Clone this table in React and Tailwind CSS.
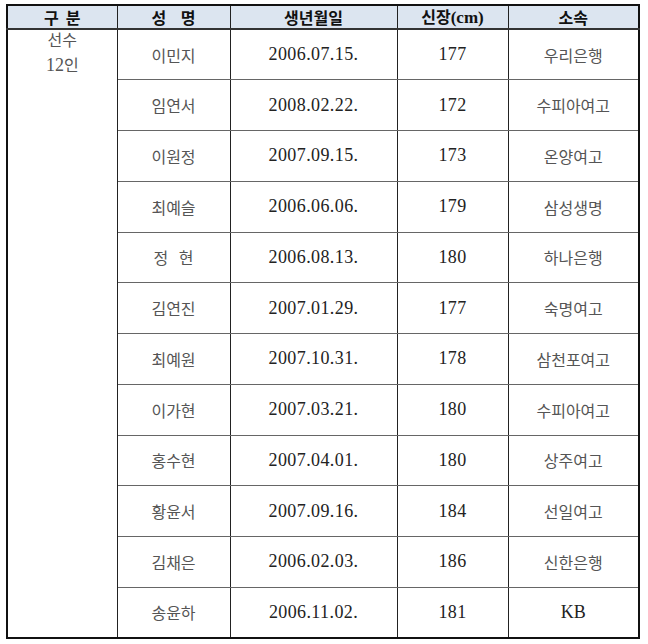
import React from "react";

const rows = [
  ["이민지", "2006.07.15.", "177", "우리은행"],
  ["임연서", "2008.02.22.", "172", "수피아여고"],
  ["이원정", "2007.09.15.", "173", "온양여고"],
  ["최예슬", "2006.06.06.", "179", "삼성생명"],
  ["정\u00a0\u00a0\u00a0현", "2006.08.13.", "180", "하나은행"],
  ["김연진", "2007.01.29.", "177", "숙명여고"],
  ["최예원", "2007.10.31.", "178", "삼천포여고"],
  ["이가현", "2007.03.21.", "180", "수피아여고"],
  ["홍수현", "2007.04.01.", "180", "상주여고"],
  ["황윤서", "2007.09.16.", "184", "선일여고"],
  ["김채은", "2006.02.03.", "186", "신한은행"],
  ["송윤하", "2006.11.02.", "181", "KB"],
];

const ko = { fontFamily: '"Noto Sans CJK KR", "Noto Sans", sans-serif' };
const num = { fontFamily: '"Liberation Serif", "Noto Sans CJK KR", serif' };

export default function App() {
  return (
    <div className="w-[648px] h-[644px] bg-white pt-[4px] pl-[6px]">
      <table
        className="border-collapse border-2 border-[#111] table-fixed w-[632px]"
        style={ko}
      >
        <colgroup>
          <col className="w-[110px]" />
          <col className="w-[113px]" />
          <col className="w-[167px]" />
          <col className="w-[111px]" />
          <col className="w-[131px]" />
        </colgroup>
        <thead>
          <tr className="h-[24px] bg-[#dce5f0]">
            <th className="border border-[#222] border-b-2 border-b-[#333] text-[16px] font-bold text-[#111] leading-none p-0">
              구&nbsp;&nbsp;분
            </th>
            <th className="border border-[#222] border-b-2 border-b-[#333] text-[16px] font-bold text-[#111] leading-none p-0">
              성&nbsp;&nbsp;&nbsp;&nbsp;명
            </th>
            <th className="border border-[#222] border-b-2 border-b-[#333] text-[16px] font-bold text-[#111] leading-none p-0">
              생년월일
            </th>
            <th className="border border-[#222] border-b-2 border-b-[#333] text-[16px] font-bold text-[#111] leading-none p-0">
              신장<span style={num} className="text-[17px]">(cm)</span>
            </th>
            <th className="border border-[#222] border-b-2 border-b-[#333] text-[16px] font-bold text-[#111] leading-none p-0">
              소속
            </th>
          </tr>
        </thead>
        <tbody>
          {rows.map((r, i) => (
            <tr key={i} className="h-[50.75px]">
              {i === 0 && (
                <td
                  rowSpan={12}
                  className="border-r border-[#222] align-top text-center text-[16px] leading-[25px] text-[#555] p-0"
                >
                  <div className="-mt-[3px]">선수</div>
                  <div>
                    <span style={num} className="text-[18px]">12</span>인
                  </div>
                </td>
              )}
              <td className="border border-[#222] border-y-[#666] text-center text-[16px] text-[#555] p-0">
                {r[0]}
              </td>
              <td
                style={num}
                className="border border-[#222] border-y-[#666] text-center text-[18px] tracking-[0.4px] text-[#222] p-0"
              >
                {r[1]}
              </td>
              <td
                style={num}
                className="border border-[#222] border-y-[#666] text-center text-[18px] tracking-[0.4px] text-[#222] p-0"
              >
                {r[2]}
              </td>
              <td
                className="border border-[#222] border-y-[#666] text-center text-[16px] text-[#555] p-0"
                style={r[3] === "KB" ? num : undefined}
              >
                {r[3] === "KB" ? <span className="text-[18px] text-[#222]">KB</span> : r[3]}
              </td>
            </tr>
          ))}
        </tbody>
      </table>
    </div>
  );
}
